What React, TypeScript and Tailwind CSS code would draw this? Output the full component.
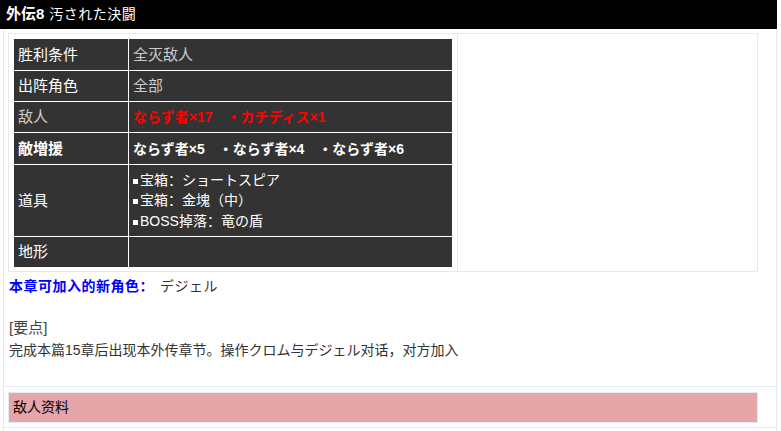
const Sq = () => <span className="inline-block w-[5px] h-[5px] bg-white mr-[2px] mb-[1px]" />;

const rows = [
  { label: '胜利条件', h: 'h-[32px]', labelCls: 'text-white', content: <span className="text-[#cccccc]">全灭敌人</span> },
  { label: '出阵角色', h: 'h-[31px]', labelCls: 'text-white', content: <span className="text-[#cccccc]">全部</span> },
  {
    label: '敌人',
    h: 'h-[31px]',
    labelCls: 'text-[#cccccc]',
    content: <span className="text-[#ff0000] font-bold text-[14px]">ならず者×17　・カチディス×1</span>,
  },
  {
    label: '敵増援',
    h: 'h-[32px]',
    labelCls: 'text-white font-bold',
    content: <span className="text-white font-bold text-[14px]">ならず者×5　・ならず者×4　・ならず者×6</span>,
  },
  {
    label: '道具',
    h: 'h-[72px]',
    labelCls: 'text-white',
    content: (
      <div className="text-white text-[14px] leading-[20.5px]">
        <div><Sq />宝箱：ショートスピア</div>
        <div><Sq />宝箱：金塊（中）</div>
        <div><Sq />BOSS掉落：竜の盾</div>
      </div>
    ),
  },
  { label: '地形', h: 'h-[31px]', labelCls: 'text-white', content: null },
];

export default function App() {
  return (
    <div className="w-[781px] h-[431px] bg-white overflow-hidden font-['Liberation_Sans','Noto_Sans_CJK_SC',sans-serif] text-[14px] text-[#333333]">
      {/* Title bar */}
      <div className="w-[777px] h-[29px] bg-black text-white flex items-center pl-[6px]">
        <span className="font-bold text-[15px]">外伝8</span>
        <span className="ml-[5px] text-[14px] tracking-[0.5px]">汚された決闘</span>
      </div>

      <div className="ml-[3px] w-[774px] border-x border-[#e0ebf5] h-[402px]">
        {/* Info box */}
        <div className="pt-[4px] pl-[4px]">
          <div className="flex w-[750px] h-[239px] border border-[#e0ebf5]">
            <div className="w-[449px] border-r border-[#e0ebf5] pl-[4px] pt-[4px]">
              <table className="w-[440px] bg-[#333333] border-collapse text-[15px] leading-[20px]">
                <tbody>
                  {rows.map((r) => (
                    <tr key={r.label} className={r.h}>
                      <td className={`w-[115px] border border-white px-[4px] py-0 ${r.labelCls}`}>{r.label}</td>
                      <td className="border border-white px-[4px] py-0">{r.content}</td>
                    </tr>
                  ))}
                </tbody>
              </table>
            </div>
            <div className="flex-1" />
          </div>
        </div>

        {/* Notes */}
        <div className="pl-[5px] pt-[2px]">
          <div className="leading-[24px]">
            <span className="text-[#0000ff] font-bold tracking-[0.5px]">本章可加入的新角色：</span>
            <span className="ml-[6px] tracking-[0.5px]">デジェル</span>
          </div>
          <div className="h-[20px]" />
          <div className="leading-[20px] text-[#444444] text-[15px]">[要点]</div>
          <div className="text-[14px] leading-[24px] text-[#333333]">
            完成本篇15章后出现本外传章节。操作クロム与デジェル对话，对方加入
          </div>
        </div>

        {/* Enemy section */}
        <div className="mt-[24px] border-t border-[#e0ebf5] pt-[5px] pl-[4px] border-b h-[42px]">
          <div className="w-[750px] h-[31px] bg-[#e6a5a9] border border-[#e0ebf5] flex items-center pl-[4px] text-black">
            敌人资料
          </div>
        </div>
      </div>
    </div>
  );
}
